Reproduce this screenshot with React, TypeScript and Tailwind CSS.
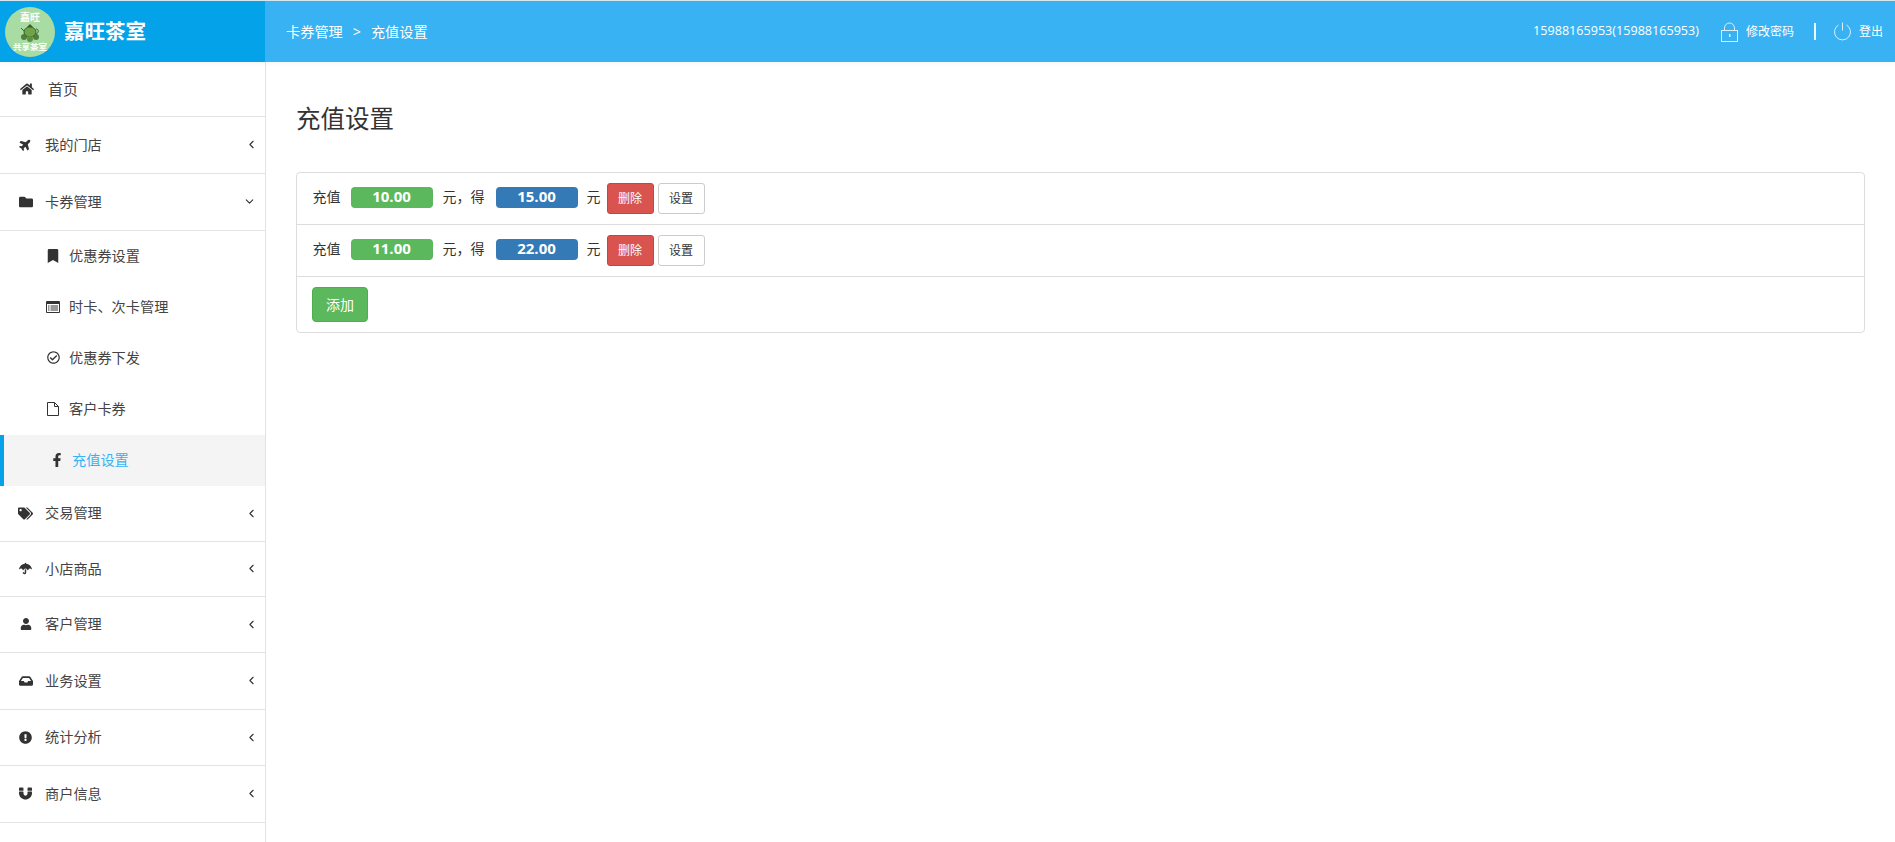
import type { ComponentType } from "react";
import { ChevronDown, ChevronLeft } from "lucide-react";
import {
  FaBookmark,
  FaExclamationCircle,
  FaFacebookF,
  FaFolder,
  FaHome,
  FaInbox,
  FaMagnet,
  FaPlane,
  FaRegCheckCircle,
  FaTags,
  FaUmbrella,
  FaUser,
} from "react-icons/fa";

type Icon = ComponentType<{ className?: string }>;

// the old font-awesome list-alt and file-o are heavier than the packaged ones
function ListAltIcon({ className }: { className?: string }) {
  return (
    <svg width="14" height="12" viewBox="0 0 14 12" className={className}>
      <path fillRule="evenodd" d="M0 1a1 1 0 0 1 1-1h12a1 1 0 0 1 1 1v10a1 1 0 0 1-1 1H1a1 1 0 0 1-1-1zM1 3v8h12V3z" fill="currentColor" />
      <path d="M2 4.5h1.5v1H2zM4.500 4.500H12v1H4.500zM2 6.500h1.500v1H2zM4.500 6.500H12v1H4.500zM2 8.500h1.500v1H2zM4.500 8.500H12v1H4.500z" fill="currentColor" />
    </svg>
  );
}

function FileIcon({ className }: { className?: string }) {
  return (
    <svg width="12" height="14" viewBox="0 0 12 14" fill="none" stroke="currentColor" className={className}>
      <path d="M0.500 0.500H7.500L11.500 4.500V13.500H0.500z" />
      <path d="M7.500 0.500V4.500H11.500" />
    </svg>
  );
}

function PlaneIcon({ className }: { className?: string }) {
  return <FaPlane className={`-rotate-45 ${className}`} />;
}

const SUB_ITEMS: { label: string; icon: Icon; iconClass: string }[] = [
  { label: "优惠券设置", icon: FaBookmark, iconClass: "text-[14px]" },
  { label: "时卡、次卡管理", icon: ListAltIcon, iconClass: "" },
  { label: "优惠券下发", icon: FaRegCheckCircle, iconClass: "text-[13px]" },
  { label: "客户卡券", icon: FileIcon, iconClass: "" },
];

const BOTTOM_ITEMS: { label: string; icon: Icon; height: string; iconClass: string }[] = [
  { label: "交易管理", icon: FaTags, height: "h-[56px]", iconClass: "text-[15px]" },
  { label: "小店商品", icon: FaUmbrella, height: "h-[55px]", iconClass: "text-[13px]" },
  { label: "客户管理", icon: FaUser, height: "h-[56px]", iconClass: "text-[12px]" },
  { label: "业务设置", icon: FaInbox, height: "h-[57px]", iconClass: "text-[14px]" },
  { label: "统计分析", icon: FaExclamationCircle, height: "h-[56px]", iconClass: "text-[13px]" },
  { label: "商户信息", icon: FaMagnet, height: "h-[57px]", iconClass: "text-[13px]" },
];

const RULES = [
  { pay: "10.00", get: "15.00" },
  { pay: "11.00", get: "22.00" },
];

function Logo() {
  return (
    <div className="flex h-[50px] w-[50px] shrink-0 flex-col items-center rounded-full bg-[#a9dca3] text-white">
      <span className="mt-[5px] text-[10px] leading-[11px] font-bold">嘉旺</span>
      <svg width="20" height="18" viewBox="0 0 20 18" className="mt-[1px]">
        <circle cx="4" cy="13" r="3" fill="#4f7f3a" />
        <circle cx="16" cy="13" r="3" fill="#4f7f3a" />
        <ellipse cx="10" cy="8" rx="6" ry="5" fill="#6fa548" stroke="#3d5f2c" strokeWidth="1" />
        <path d="M7 3h6L10 0z" fill="#3d5f2c" />
        <path d="M1 4l3 3M16 5c3 0 3 4 0 5" fill="none" stroke="#3d5f2c" />
        <circle cx="10" cy="15" r="3" fill="#5d9040" />
      </svg>
      <span className="text-[8.500px] leading-[10px] font-bold whitespace-nowrap">共享茶室</span>
    </div>
  );
}

function MenuRow({ label, icon: Ico, height, iconClass, open }: { label: string; icon: Icon; height: string; iconClass: string; open?: boolean }) {
  return (
    <div className={`flex items-center border-b border-[#e3e3e3] pr-[7px] pb-[1px] ${height}`}>
      <span className="flex w-[45px] shrink-0 justify-center pl-[6px] text-[#333]">
        <Ico className={iconClass} />
      </span>
      <span className="flex-1 text-[14.200px] text-[#444]">{label}</span>
      {open ? (
        <ChevronDown size={13} strokeWidth={2} className="mr-[2px] text-[#333]" />
      ) : (
        <ChevronLeft size={13} strokeWidth={2} className="text-[#333]" />
      )}
    </div>
  );
}

function Sidebar() {
  return (
    <aside className="w-[266px] shrink-0 border-r border-[#e3e3e3] bg-white">
      <div className="flex h-[55px] items-center border-b border-[#e3e3e3]">
        <span className="flex w-[48px] shrink-0 justify-center pl-[6px] text-[#333]">
          <FaHome className="text-[14px]" />
        </span>
        <span className="text-[15px] text-[#444]">首页</span>
      </div>
      <MenuRow label="我的门店" icon={PlaneIcon} height="h-[57px]" iconClass="text-[13px]" />
      <MenuRow label="卡券管理" icon={FaFolder} height="h-[57px]" iconClass="text-[14px]" open />
      {SUB_ITEMS.map((item) => (
        <div key={item.label} className="flex h-[51px] items-center pb-[2px]">
          <span className="flex w-[69px] shrink-0 justify-center pl-[37px] text-[#333]">
            <item.icon className={item.iconClass} />
          </span>
          <span className="text-[14.200px] text-[#444]">{item.label}</span>
        </div>
      ))}
      <div className="flex h-[51px] items-center border-l-4 border-[#04a3e9] bg-[#f4f4f4] pb-[2px]">
        <span className="flex w-[68px] shrink-0 justify-center pl-[42px] pr-[4px] text-[#333]">
          <FaFacebookF className="text-[14px]" />
        </span>
        <span className="text-[14.200px] text-[#38b2f3]">充值设置</span>
      </div>
      {BOTTOM_ITEMS.map((item) => (
        <MenuRow key={item.label} {...item} />
      ))}
    </aside>
  );
}

function Header() {
  return (
    <header className="relative flex h-[62px] shrink-0 border-t border-[#d5e6ef] bg-[#38b2f3] text-white shadow-[0_2px_4px_rgba(0,0,0,0.04)]">
      <div className="flex w-[265px] shrink-0 items-center gap-[9px] bg-[#04a3e9] pl-[5px]">
        <Logo />
        <span className="text-[20.500px] font-bold">嘉旺茶室</span>
      </div>
      <div className="flex flex-1 items-center pl-[21px] text-[14.200px]">
        <span>卡券管理</span>
        <span className="mx-[10px]">&gt;</span>
        <span>充值设置</span>
      </div>
      <div className="flex items-center pr-[12px] text-[12px]">
        <span className="mr-[22px] text-[12.600px]">15988165953(15988165953)</span>
        <svg width="17" height="20" viewBox="0 0 17 20" fill="none" stroke="#d8f0fd" strokeWidth="1" className="mr-[8px]">
          <rect x="0.500" y="8.500" width="16" height="11" />
          <path d="M3.500 8.500V6a5 5 0 0 1 10 0v2.500" />
          <rect x="8" y="12" width="1.500" height="3" fill="#d8f0fd" stroke="none" />
        </svg>
        <span>修改密码</span>
        <span className="ml-[20px] mr-[17px] h-[17px] w-[2px] bg-white/90" />
        <svg width="19" height="19" viewBox="0 0 19 19" fill="none" stroke="#d8f0fd" strokeWidth="1" className="mr-[7px]">
          <path d="M5.500 3a8 8 0 1 0 8 0" />
          <path d="M9.500 0.500v8" />
        </svg>
        <span>登出</span>
      </div>
    </header>
  );
}

function RuleRow({ pay, get }: { pay: string; get: string }) {
  return (
    <div className="flex h-[52px] items-center border-b border-[#ddd] pl-[15.500px] text-[14px] text-[#333]">
      <span className="-mt-[5px]">充值</span>
      <span className="mx-[10px] -mt-[2px] w-[82px] rounded-[4px] bg-[#5cb85c] pb-[2px] text-center text-[15px] leading-[19px] font-bold text-white">{pay}</span>
      <span className="-mt-[5px]">元，得</span>
      <span className="ml-[11px] mr-[9px] -mt-[2px] w-[82px] rounded-[4px] bg-[#337ab7] pb-[2px] text-center text-[15px] leading-[19px] font-bold text-white">{get}</span>
      <span className="-mt-[5px]">元</span>
      <button className="ml-[6px] h-[31px] w-[47px] rounded-[3px] border border-[#d43f3a] bg-[#d9534f] text-[12px] text-white">删除</button>
      <button className="ml-[4px] h-[31px] w-[47px] rounded-[3px] border border-[#ccc] bg-white text-[12px] text-[#333]">设置</button>
    </div>
  );
}

export default function App() {
  return (
    <div className="flex h-screen flex-col overflow-hidden bg-white font-['Open_Sans','Noto_Sans_CJK_SC',sans-serif]">
      <Header />
      <div className="flex flex-1">
        <Sidebar />
        <main className="flex-1 px-[30px]">
          <h1 className="mt-[40px] text-[24.500px] leading-[34px] text-[#333]">充值设置</h1>
          <div className="mt-[36px] overflow-hidden rounded-[4px] border border-[#ddd]">
            {RULES.map((r) => (
              <RuleRow key={r.pay} pay={r.pay} get={r.get} />
            ))}
            <div className="flex h-[55px] items-center pl-[15px]">
              <button className="h-[35px] w-[56px] rounded-[4px] border border-[#4cae4c] bg-[#5cb85c] text-[14px] text-white">添加</button>
            </div>
          </div>
        </main>
      </div>
    </div>
  );
}
